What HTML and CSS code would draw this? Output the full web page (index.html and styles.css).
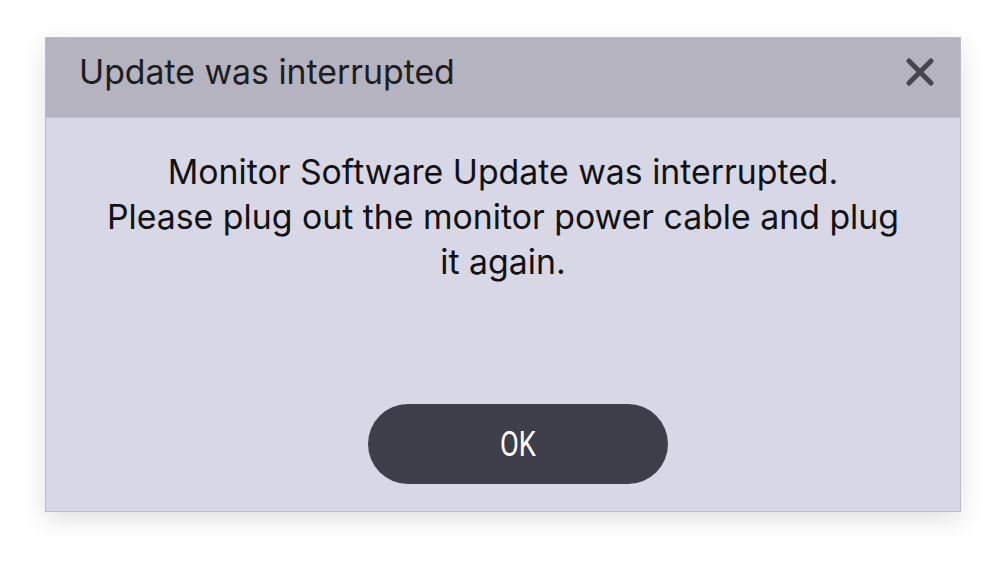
FILE: index.html
```html
<!DOCTYPE html>
<html>
<head>
<meta charset="utf-8">
<link rel="stylesheet" href="styles.css">
</head>
<body>
<div class="stage">
  <div class="dialog">
    <div class="header">
      <span class="title">Update was interrupted</span>
      <svg class="close" width="32" height="32" viewBox="0 0 32 32">
        <path d="M5 5 L27 27 M27 5 L5 27" stroke="#45444f" stroke-width="5" stroke-linecap="round" fill="none"/>
      </svg>
    </div>
    <div class="body">
      <p class="message">Monitor Software Update was interrupted.<br>Please plug out the monitor power cable and plug it again.</p>
      <button class="ok"><span class="ok-label">OK</span></button>
    </div>
  </div>
</div>
</body>
</html>
```
FILE: styles.css
```css
html, body {
  margin: 0;
  padding: 0;
  background: #ffffff;
}
.stage {
  width: 1006px;
  height: 566px;
  padding: 37px 0 0 45px;
  box-sizing: border-box;
}
.dialog {
  width: 916px;
  height: 475px;
  box-sizing: border-box;
  border: 1px solid #bdbcc4;
  background: #d8d7e6;
  box-shadow: 0 8px 24px rgba(0,0,0,0.12);
  display: flex;
  flex-direction: column;
  font-family: Inter, "Liberation Sans", sans-serif;
}
.header {
  height: 80px;
  background: #b4b3bf;
  display: flex;
  align-items: center;
  justify-content: space-between;
  padding: 0 24px 0 33px;
  border-bottom: 1px solid #c4c3cf;
  box-sizing: border-box;
}
.title {
  font-size: 33.8px;
  color: #1d1d22;
  margin-top: -12px;
}
.close {
  margin-top: -12px;
}
.body {
  flex: 1;
  display: flex;
  flex-direction: column;
  align-items: center;
}
.message {
  margin: 31px 0 0;
  width: 820px;
  text-align: center;
  font-size: 33.8px;
  line-height: 45px;
  color: #111114;
}
.ok {
  margin-top: auto;
  margin-bottom: 27px;
  margin-left: 30px;
  width: 300px;
  height: 80px;
  border: none;
  border-radius: 40px;
  background: #3f3e4b;
  color: #ffffff;
  font-family: Roboto, sans-serif;
  font-weight: 400;
  font-size: 35px;
  padding: 0;
}
.ok-label {
  display: inline-block;
  transform: scaleX(0.78);
}
```
